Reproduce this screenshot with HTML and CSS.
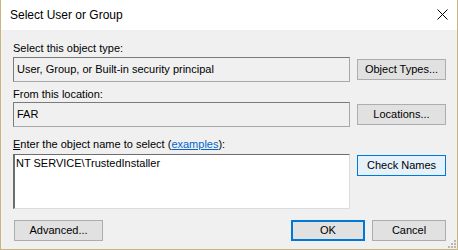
FILE: index.html
```html
<!DOCTYPE html>
<html>
<head>
<meta charset="utf-8">
<link rel="stylesheet" href="styles.css">
</head>
<body>
<div class="window">
  <div class="titlebar">
    <span class="title">Select User or Group</span>
    <svg class="close" width="11" height="11" viewBox="0 0 11 11"><path d="M0.5 0.5L10.5 10.5M10.5 0.5L0.5 10.5" stroke="#000" stroke-width="1" fill="none"/></svg>
  </div>
  <div class="content">
    <div class="label l1">Select this object type:</div>
    <div class="row">
      <div class="field">User, Group, or Built-in security principal</div>
      <div class="btn">Object Types...</div>
    </div>
    <div class="label l2">From this location:</div>
    <div class="row">
      <div class="field">FAR</div>
      <div class="btn">Locations...</div>
    </div>
    <div class="label l3"><u>E</u>nter the object name to select (<a class="link">examples</a>):</div>
    <div class="row top">
      <div class="field area">NT SERVICE\TrustedInstaller</div>
      <div class="btn focus">Check Names</div>
    </div>
    <div class="footer">
      <div class="btn">Advanced...</div>
      <div class="spacer"></div>
      <div class="btn small default">OK</div>
      <div class="btn small">Cancel</div>
    </div>
  </div>
  <svg class="grip" width="8" height="8" viewBox="0 0 8 8">
    <rect x="6" y="0" width="2" height="2" fill="#b8b8b8"/>
    <rect x="3" y="3" width="2" height="2" fill="#b8b8b8"/>
    <rect x="6" y="3" width="2" height="2" fill="#b8b8b8"/>
    <rect x="0" y="6" width="2" height="2" fill="#b8b8b8"/>
    <rect x="3" y="6" width="2" height="2" fill="#b8b8b8"/>
    <rect x="6" y="6" width="2" height="2" fill="#b8b8b8"/>
  </svg>
</div>
</body>
</html>
```
FILE: styles.css
```css
html, body {
  margin: 0;
  padding: 0;
  background: #f0f0f0;
}
.window {
  position: relative;
  width: 458px;
  height: 250px;
  box-sizing: border-box;
  border: 1px solid #cbb57d;
  border-top: none;
  background: #f0f0f0;
  display: flex;
  flex-direction: column;
  font-family: "Liberation Sans", Arial, sans-serif;
  font-size: 11px;
  color: #000;
}
.titlebar {
  height: 30px;
  flex: none;
  background: #fff;
  display: flex;
  align-items: center;
  justify-content: space-between;
  padding: 0 9px 0 9px;
}
.title {
  font-size: 12px;
  margin-top: -1px;
}
.close {
  display: block;
  margin-top: -1px;
}
.content {
  padding: 0 11px 0 12px;
  display: flex;
  flex-direction: column;
}
.label {
  line-height: 13px;
}
.label.l1 {
  margin-top: 12px;
  margin-bottom: 2px;
}
.label.l2 {
  margin-top: 6px;
  margin-bottom: 1px;
}
.label.l3 {
  margin-top: 11px;
  margin-bottom: 3px;
}
.link {
  color: #0066cc;
  text-decoration: underline;
}
.row {
  display: flex;
  align-items: center;
  gap: 7px;
}
.row.top {
  align-items: flex-start;
}
.field {
  width: 337px;
  height: 25px;
  box-sizing: border-box;
  border: 1px solid #7a7a7a;
  border-right-color: #a8a8a8;
  border-bottom-color: #a8a8a8;
  background: #f0f0f0;
  padding: 5px 0 0 3px;
  line-height: 13px;
}
.field.area {
  height: 55px;
  background: #fff;
  padding: 2px 0 0 1px;
  border-color: #6d6d6d #dcdcdc #dcdcdc #6d6d6d;
  border-width: 1px 1px 1px 2px;
}
.btn {
  width: 89px;
  height: 21px;
  box-sizing: border-box;
  border: 1px solid #adadad;
  background: #e1e1e1;
  display: flex;
  align-items: center;
  justify-content: center;
  line-height: 13px;
  flex: none;
}
.btn.focus {
  border-color: #0078d7;
  background: #e5f1fb;
  margin-top: 1px;
}
.btn.small {
  width: 74px;
}
.btn.default {
  border: 2px solid #0078d7;
}
.footer {
  display: flex;
  gap: 7px;
  margin-top: 11px;
  padding-left: 1px;
}
.spacer {
  flex: 1;
}
.grip {
  position: absolute;
  right: 1px;
  bottom: 1px;
}
```
